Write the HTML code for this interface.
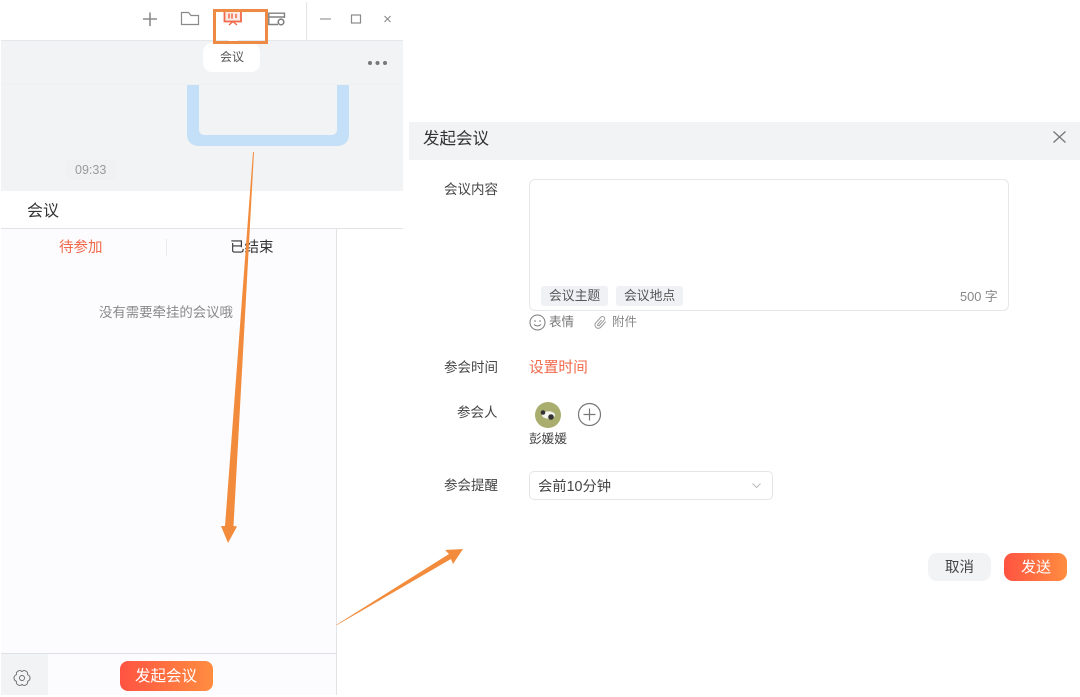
<!DOCTYPE html>
<html lang="zh">
<head>
<meta charset="utf-8">
<style>
html,body{margin:0;padding:0;background:#fff}
body{width:1080px;height:697px;position:relative;overflow:hidden;font-family:"Liberation Sans","Noto Sans CJK SC",sans-serif;color:#333}
.a{position:absolute}
.t{position:absolute;white-space:nowrap;line-height:18px;font-size:13.5px;color:#444;filter:blur(.25px)}
svg{position:absolute;overflow:visible}
</style>
</head>
<body>
<!-- left panel -->
<div class="a" style="left:1px;top:41px;width:402px;height:150px;background:#f2f3f5"></div>
<div class="a" style="left:1px;top:40px;width:402px;height:1px;background:#e6e7ea"></div>
<div class="a" style="left:306px;top:2px;width:1px;height:38px;background:#e3e4e7"></div>
<div class="a" style="left:1px;top:84px;width:402px;height:1px;background:#eef0f2"></div>

<svg style="left:0;top:0" width="403" height="41" fill="none">
<path d="M150 12.500V26M143 19H157" stroke="#8a8a8a" stroke-width="1.600"/>
<path d="M181.500 24.500V12.500H188.500L191 15.500H198.500V24.500Z" stroke="#8a8a8a" stroke-width="1.200"/>
<path d="M224.500 10H241V21.500H224.500Z" fill="#fbe9e3" stroke="#f0694a" stroke-width="1.800"/>
<path d="M229 13.500V18.500M232 13.500V18.500M236 14V18" stroke="#f0694a" stroke-width="1.500"/>
<path d="M229 25L233 21.500L237 25" stroke="#f0694a" stroke-width="1.400"/>
<path d="M278 24.500H268.800V13.200H284.500V18M268.800 17H284.500" stroke="#808080" stroke-width="1.400"/>
<circle cx="281" cy="22" r="2.800" stroke="#808080" stroke-width="1.600"/>
<path d="M320 19H331" stroke="#9a9a9a" stroke-width="1.200"/>
<rect x="351.500" y="15" width="9" height="8" stroke="#8a8a8a" stroke-width="1.200"/>
<path d="M384.500 16L390.500 22M390.500 16L384.500 22" stroke="#8a8a8a" stroke-width="1.100"/>
</svg>

<div class="a" style="left:203px;top:43px;width:57px;height:29px;border-radius:9px;background:#fff"></div>
<div class="a" style="left:226px;top:36px;width:0;height:0;border-left:7px solid transparent;border-right:7px solid transparent;border-bottom:7px solid #fff"></div>
<div class="t" style="left:220px;top:48px;font-size:12px;color:#555">会议</div>
<div class="a" style="left:213px;top:9px;width:49px;height:29px;border:3px solid #ed8b45"></div>

<div class="a" style="left:368px;top:61px;width:4px;height:4px;border-radius:50%;background:#777;box-shadow:7.500px 0 0 #777,15px 0 0 #777"></div>

<div class="a" style="left:187px;top:85px;width:162px;height:61px;background:#c4dff8;border-radius:0 0 11px 11px"></div>
<div class="a" style="left:199px;top:85px;width:138px;height:50px;background:#f2f3f5;border-radius:0 0 5px 5px"></div>
<div class="a" style="left:66px;top:160px;width:50px;height:20px;border-radius:4px;background:#f0f1f3"></div>
<div class="t" style="left:75px;top:161px;font-size:12.500px;color:#9a9a9a">09:33</div>

<div class="t" style="left:27px;top:203px;font-size:16px;color:#333">会议</div>
<div class="a" style="left:1px;top:228px;width:402px;height:1px;background:#e2e3e6"></div>

<div class="a" style="left:1px;top:229px;width:335px;height:424px;background:#fcfcfe"></div>
<div class="a" style="left:336px;top:229px;width:1px;height:466px;background:#e2e3e6"></div>
<div class="t" style="left:59px;top:239px;font-size:14.500px;color:#f0694a">待参加</div>
<div class="a" style="left:166px;top:239px;width:1px;height:17px;background:#eaebed"></div>
<div class="t" style="left:230px;top:239px;font-size:14.500px;color:#333">已结束</div>
<div class="t" style="left:99px;top:304px;font-size:13.400px;color:#888">没有需要牵挂的会议哦</div>

<div class="a" style="left:1px;top:653px;width:335px;height:1px;background:#dfe0e3"></div>
<div class="a" style="left:1px;top:654px;width:47px;height:41px;background:#f2f3f5"></div>
<div class="a" style="left:48px;top:654px;width:288px;height:41px;background:#fcfcfe"></div>
<svg style="left:13px;top:669.500px" width="18" height="16" viewBox="0 0 18 16" fill="none" stroke="#666" stroke-width="0.900">
<path d="M9 1.500A3.400 3.400 0 0 1 14.600 4.750A3.400 3.400 0 0 1 14.600 11.250A3.400 3.400 0 0 1 9 14.500A3.400 3.400 0 0 1 3.400 11.250A3.400 3.400 0 0 1 3.400 4.750A3.400 3.400 0 0 1 9 1.500Z" stroke-linejoin="round"/>
<circle cx="9" cy="8" r="2.500"/>
</svg>
<div class="a" style="left:120px;top:661px;width:93px;height:30px;border-radius:8px;background:linear-gradient(90deg,#ff5342,#ff8d40)"></div>
<div class="t" style="left:135px;top:668px;font-size:15.500px;color:#fff">发起会议</div>

<!-- dialog -->
<div class="a" style="left:409px;top:122px;width:671px;height:38px;background:#f2f3f5"></div>
<div class="t" style="left:423px;top:130px;font-size:16.500px;color:#333">发起会议</div>
<svg style="left:1053px;top:131px" width="13" height="12" fill="none"><path d="M.5 .5L12.500 11.500M12.500 .5L.5 11.500" stroke="#777" stroke-width="1.300"/></svg>

<div class="t" style="left:444px;top:181px">会议内容</div>
<div class="a" style="left:529px;top:179px;width:480px;height:132px;box-sizing:border-box;border:1px solid #e6e7ea;border-radius:6px;background:#fff"></div>
<div class="a" style="left:541px;top:286px;width:67px;height:20px;border-radius:3px;background:#eff1f4"></div>
<div class="t" style="left:549px;top:287px;font-size:12.800px;color:#555">会议主题</div>
<div class="a" style="left:616px;top:286px;width:67px;height:20px;border-radius:3px;background:#eff1f4"></div>
<div class="t" style="left:624px;top:287px;font-size:12.800px;color:#555">会议地点</div>
<div class="t" style="left:960px;top:288px;font-size:12.800px;color:#888">500 字</div>

<svg style="left:529px;top:314px" width="17" height="17" fill="none">
<circle cx="8.500" cy="8.500" r="7.500" stroke="#777" stroke-width="1"/>
<circle cx="6" cy="7" r=".8" fill="#777"/><circle cx="11" cy="7" r=".8" fill="#777"/>
<path d="M5 10.500Q8.500 13.500 12 10.500" stroke="#777" stroke-width="1"/>
</svg>
<svg style="left:593px;top:315px" width="15" height="16" viewBox="0 0 15 16" fill="none">
<path d="M10.500 3.500V11a3.300 3.300 0 0 1 -6.600 0V3.500a2.200 2.200 0 0 1 4.400 0V10.500a1 1 0 0 1 -2 0V5" transform="rotate(42 7.500 8)" stroke="#999" stroke-width="1"/>
</svg>
<div class="t" style="left:549px;top:313px;font-size:12.500px;color:#777">表情</div>
<div class="t" style="left:612px;top:313px;font-size:12.500px;color:#888">附件</div>

<div class="t" style="left:444px;top:359px">参会时间</div>
<div class="t" style="left:529px;top:359px;font-size:14.700px;color:#f0694a">设置时间</div>

<div class="t" style="left:457px;top:404px">参会人</div>
<svg style="left:535px;top:403px" width="68" height="24" fill="none">
<circle cx="13" cy="12" r="13" fill="#a9ad6e"/>
<ellipse cx="13.500" cy="12" rx="6.500" ry="3.800" fill="#f4f4ee"/>
<circle cx="8" cy="9.500" r="2.300" fill="#333"/>
<circle cx="16" cy="14" r="2.800" fill="#333"/>
<circle cx="54.500" cy="11.500" r="11" stroke="#777" stroke-width="1.200"/>
<path d="M54.500 5.500V17.500M48.500 11.500H60.500" stroke="#777" stroke-width="1.200"/>
</svg>
<div class="t" style="left:529px;top:430px;font-size:12.700px;color:#444">彭媛媛</div>

<div class="t" style="left:444px;top:477px">参会提醒</div>
<div class="a" style="left:529px;top:471px;width:244px;height:29px;box-sizing:border-box;border:1px solid #e4e5e8;border-radius:5px;background:#fff"></div>
<div class="t" style="left:538px;top:478px;font-size:14.300px;color:#444">会前10分钟</div>
<svg style="left:752px;top:483px" width="9" height="6" fill="none"><path d="M.5 .5L4.500 4.500L8.500 .5" stroke="#bbb" stroke-width="1"/></svg>

<div class="a" style="left:928px;top:553px;width:63px;height:28px;border-radius:9px;background:#f2f3f5"></div>
<div class="t" style="left:945px;top:559px;font-size:14.500px;color:#444">取消</div>
<div class="a" style="left:1004px;top:553px;width:63px;height:28px;border-radius:9px;background:linear-gradient(90deg,#ff5342,#ff8d40)"></div>
<div class="t" style="left:1021px;top:559px;font-size:15px;color:#fff">发送</div>

<!-- arrows -->
<svg style="left:0;top:0" width="1080" height="697">
<path d="M254 152L233.500 526L237 526.500L228 543L221 526L225 526L253 152Z" fill="#f28c3c"/>
<path d="M336 625L449 554L445 550L463 549L453 564L451 559L337 625Z" fill="#f28c3c"/>
</svg>
</body>
</html>
